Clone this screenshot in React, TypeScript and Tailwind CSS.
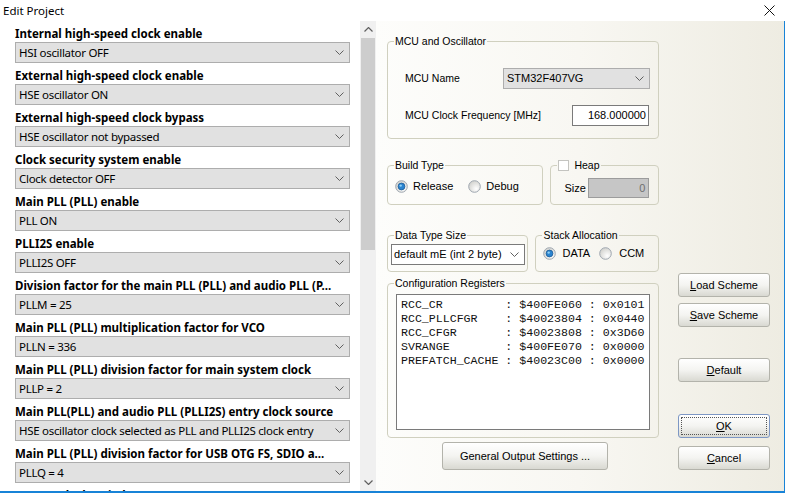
import React from "react";

const items: [string, string][] = [
  ["Internal high-speed clock enable", "HSI oscillator OFF"],
  ["External high-speed clock enable", "HSE oscillator ON"],
  ["External high-speed clock bypass", "HSE oscillator not bypassed"],
  ["Clock security system enable", "Clock detector OFF"],
  ["Main PLL (PLL) enable", "PLL ON"],
  ["PLLI2S enable", "PLLI2S OFF"],
  ["Division factor for the main PLL (PLL) and audio PLL (P...", "PLLM = 25"],
  ["Main PLL (PLL) multiplication factor for VCO", "PLLN = 336"],
  ["Main PLL (PLL) division factor for main system clock", "PLLP = 2"],
  ["Main PLL(PLL) and audio PLL (PLLI2S) entry clock source", "HSE oscillator clock selected as PLL and PLLI2S clock entry"],
  ["Main PLL (PLL) division factor for USB OTG FS, SDIO a...", "PLLQ = 4"],
  ["System clock switch", "HSI selected as system clock"],
];

const regs = [
  "RCC_CR         : $400FE060 : 0x0101",
  "RCC_PLLCFGR    : $40023804 : 0x0440",
  "RCC_CFGR       : $40023808 : 0x3D60",
  "SVRANGE        : $400FE070 : 0x0000",
  "PREFATCH_CACHE : $40023C00 : 0x0000",
];

function Chevron() {
  return (
    <svg width="9" height="5" viewBox="0 0 9 5" className="shrink-0">
      <path d="M0.5 0.5 L4.5 4.5 L8.5 0.5" fill="none" stroke="#606060" strokeWidth="1" />
    </svg>
  );
}

function Radio({ checked }: { checked?: boolean }) {
  return (
    <svg width="13" height="13" viewBox="0 0 13 13" className="shrink-0">
      <defs>
        <radialGradient id={checked ? "rgc" : "rgu"} cx="0.65" cy="0.7" r="0.7">
          <stop offset="0" stopColor="#ffffff" />
          <stop offset="1" stopColor="#d4d4d0" />
        </radialGradient>
      </defs>
      <circle cx="6.5" cy="6.5" r="5.8" fill={`url(#${checked ? "rgc" : "rgu"})`} stroke="#9fa7b0" strokeWidth="1" />
      {checked && (
        <>
          <circle cx="6.5" cy="6.5" r="3.4" fill="#2b84d0" stroke="#1c5a94" strokeWidth="0.8" />
          <circle cx="5.7" cy="5.6" r="1.2" fill="#8fd0f5" />
        </>
      )}
    </svg>
  );
}

function XpButton({ children, focused, className = "" }: { children: React.ReactNode; focused?: boolean; className?: string }) {
  return (
    <div
      className={
        "h-[24px] flex items-center justify-center rounded-[3px] border bg-gradient-to-b from-[#ffffff] via-[#f4f4f1] to-[#d9d9d2] text-[11px] text-black " +
        (focused ? "border-[#7d97c4] " : "border-[#b3b3ab] ") +
        className
      }
    >
      {focused ? (
        <div className="w-[86px] h-[18px] border border-dotted border-[#555] flex items-center justify-center">{children}</div>
      ) : (
        children
      )}
    </div>
  );
}

export default function App() {
  return (
    <div
      className="w-[785px] h-[493px] overflow-hidden bg-white flex flex-col"
      style={{ fontFamily: '"Noto Sans", "Liberation Sans", sans-serif' }}
    >
      {/* title bar */}
      <div className="h-[21px] shrink-0 flex items-center justify-between bg-white">
        <span className="pl-[3px] text-[11.5px] leading-[14px] text-black">Edit Project</span>
        <svg width="11" height="11" viewBox="0 0 11 11" className="mr-[10px]">
          <path d="M0.5 0.5 L10.5 10.5 M10.5 0.5 L0.5 10.5" stroke="#111" strokeWidth="1" />
        </svg>
      </div>

      {/* body */}
      <div className="flex-1 flex border-r border-b-2 border-[#1883d7] min-h-0">
        {/* left list */}
        <div className="w-[360px] shrink-0 bg-white overflow-hidden">
          {items.map(([label, value], i) => (
            <div key={i}>
              <div className="h-[21px] pl-[15px] pt-[4px] text-[11.5px] leading-[17px] font-bold text-black whitespace-nowrap">
                {label}
              </div>
              <div className="ml-[15px] w-[335px] h-[21px] bg-[#e1e1e1] border border-[#adadad] flex items-center justify-between pl-[3px] pr-[5px]">
                <span className="text-[11.5px] leading-[14px] tracking-[-0.3px] text-black whitespace-nowrap">{value}</span>
                <Chevron />
              </div>
            </div>
          ))}
        </div>

        {/* scrollbar */}
        <div className="w-[16px] shrink-0 bg-[#f0f0f0] flex flex-col">
          <div className="h-[17px] flex items-center justify-center">
            <svg width="9" height="5" viewBox="0 0 9 5">
              <path d="M0.5 4.5 L4.5 0.5 L8.5 4.5" fill="none" stroke="#606060" strokeWidth="1.2" />
            </svg>
          </div>
          <div className="h-[212px] mx-[1px] bg-[#cdcdcd]" />
          <div className="flex-1" />
          <div className="h-[17px] flex items-center justify-center">
            <svg width="9" height="5" viewBox="0 0 9 5">
              <path d="M0.5 0.5 L4.5 4.5 L8.5 0.5" fill="none" stroke="#606060" strokeWidth="1.2" />
            </svg>
          </div>
        </div>

        {/* right area */}
        <div
          className="flex-1 flex bg-gradient-to-r from-[#fdfdfb] via-[#f8f7f2] to-[#eeece2] text-[11px] text-black"
          style={{ fontFamily: '"Liberation Sans", Arial, sans-serif' }}
        >
          {/* groups column */}
          <div className="w-[272px] ml-[11px] pt-[14px] flex flex-col">
            <fieldset className="h-[104px] border border-[#d0d0bf] rounded-[4px] px-0">
              <legend className="ml-[6px] px-[1px] text-[10.5px] leading-[13px]">MCU and Oscillator</legend>
              <div className="mt-[20px] flex items-center h-[21px]">
                <span className="ml-[17px] w-[98px] text-[10.5px]">MCU Name</span>
                <div className="w-[147px] h-[21px] bg-[#e1e1e1] border border-[#adadad] flex items-center justify-between pl-[3px] pr-[5px]">
                  <span className="text-[11px]">STM32F407VG</span>
                  <Chevron />
                </div>
              </div>
              <div className="mt-[16px] flex items-center h-[21px]">
                <span className="ml-[17px] flex-1 text-[10.5px]">MCU Clock Frequency [MHz]</span>
                <div className="w-[77px] h-[21px] mr-[9px] bg-white border border-[#7a7a7a] flex items-center justify-end pr-[2px]">
                  <span className="text-[11px]">168.000000</span>
                </div>
              </div>
            </fieldset>

            <div className="mt-[20px] flex h-[46px]">
              <fieldset className="w-[157px] h-[46px] border border-[#d0d0bf] rounded-[4px]">
                <legend className="ml-[6px] px-[1px] text-[10.5px] leading-[13px]">Build Type</legend>
                <div className="mt-[6px] ml-[7px] flex items-center">
                  <Radio checked />
                  <span className="ml-[5px]">Release</span>
                  <span className="ml-[15px]"><Radio /></span>
                  <span className="ml-[5px]">Debug</span>
                </div>
              </fieldset>
              <fieldset className="ml-[7px] w-[109px] h-[46px] border border-[#d0d0bf] rounded-[4px]">
                <legend className="ml-[6px] px-[1px] text-[10.5px] leading-[13px] flex items-center">
                  <span className="inline-block w-[11px] h-[11px] border border-[#c4c4c0] bg-white mr-[5px]" />
                  Heap
                </legend>
                <div className="mt-[6px] flex items-center">
                  <span className="ml-[13px] w-[24px]">Size</span>
                  <div className="w-[61px] h-[20px] bg-[#c6c6c6] border border-[#9c9c9c] flex items-center justify-end pr-[3px] text-[#707070]">
                    0
                  </div>
                </div>
              </fieldset>
            </div>

            <div className="mt-[24px] flex h-[43px]">
              <fieldset className="w-[142px] h-[43px] border border-[#d0d0bf] rounded-[4px]">
                <legend className="ml-[6px] px-[1px] text-[10.5px] leading-[13px]">Data Type Size</legend>
                <div className="mt-[2px] ml-[3px] w-[134px] h-[21px] bg-white border border-[#7a7a7a] flex items-center justify-between pl-[2px] pr-[5px]">
                  <span className="text-[11px] whitespace-nowrap">default mE (int 2 byte)</span>
                  <Chevron />
                </div>
              </fieldset>
              <fieldset className="ml-[7px] w-[124px] h-[43px] border border-[#d0d0bf] rounded-[4px]">
                <legend className="ml-[6px] px-[1px] text-[10.5px] leading-[13px]">Stack Allocation</legend>
                <div className="mt-[3px] ml-[7px] flex items-center">
                  <Radio checked />
                  <span className="ml-[6px]">DATA</span>
                  <span className="ml-[9px]"><Radio /></span>
                  <span className="ml-[7px]">CCM</span>
                </div>
              </fieldset>
            </div>

            <fieldset className="mt-[5px] h-[161px] border border-[#d0d0bf] rounded-[4px]">
              <legend className="ml-[6px] px-[1px] text-[10.5px] leading-[13px]">Configuration Registers</legend>
              <div className="mt-[4px] ml-[8px] w-[254px] h-[136px] bg-white border border-[#7a7a7a] pl-[4px] pt-[3px]">
                {regs.map((r, i) => (
                  <div
                    key={i}
                    className="text-[11.6px] leading-[14px] whitespace-pre text-[#111]"
                    style={{ fontFamily: '"Liberation Mono", "Courier New", monospace' }}
                  >
                    {r}
                  </div>
                ))}
              </div>
            </fieldset>

            <div className="mt-[4px] flex justify-center">
              <div className="ml-[4px] w-[166px] h-[28px] flex items-center justify-center rounded-[3px] border border-[#b3b3ab] bg-gradient-to-b from-[#ffffff] via-[#f4f4f1] to-[#d9d9d2] text-[11px]">
                General Output Settings ...
              </div>
            </div>
          </div>

          {/* buttons column */}
          <div className="w-[92px] ml-[19px] pt-[252px] flex flex-col">
            <XpButton><span><u>L</u>oad Scheme</span></XpButton>
            <XpButton className="mt-[6px]"><span><u>S</u>ave Scheme</span></XpButton>
            <XpButton className="mt-[31px]"><span><u>D</u>efault</span></XpButton>
            <XpButton focused className="mt-[32px]"><span><u>O</u>K</span></XpButton>
            <XpButton className="mt-[8px]"><span><u>C</u>ancel</span></XpButton>
          </div>
        </div>
      </div>
    </div>
  );
}
